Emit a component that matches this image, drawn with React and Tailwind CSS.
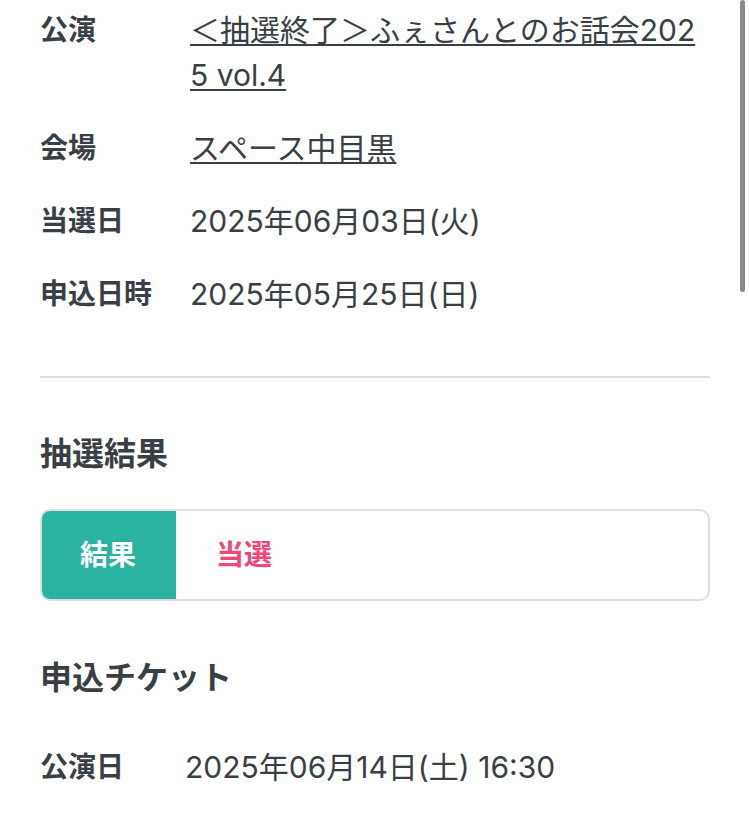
import React from "react";

const labelCls =
  "w-[150px] shrink-0 text-[28px] leading-[45px] font-bold text-[#3a3f46]";
const valueCls = "flex-1 text-[30px] leading-[45px] text-[#3a3f46] break-all";

function InfoRow({ label, children, labelWidth }) {
  return (
    <div className="flex">
      <div className={labelWidth || labelCls}>{label}</div>
      <div className={valueCls}>{children}</div>
    </div>
  );
}

export default function App() {
  return (
    <div
      className="relative w-[749px] h-[822px] overflow-hidden bg-white"
      style={{ fontFamily: 'Inter, "Noto Sans CJK JP", sans-serif' }}
    >
      {/* scroll indicator */}
      <div className="absolute right-[4px] top-0 w-[5px] h-[292px] rounded-full bg-[#8a8a8a]" />

      <div className="pl-[40px] pr-[39px] pt-[8px]">
        {/* Event info */}
        <div className="flex flex-col gap-[28px]">
          <InfoRow label="公演">
            <a href="#" className="underline underline-offset-[3px] decoration-[2px]">
              ＜抽選終了＞ふぇさんとのお話会2025 vol.4
            </a>
          </InfoRow>
          <InfoRow label="会場">
            <a href="#" className="underline underline-offset-[3px] decoration-[2px]">
              スペース中目黒 
            </a>
          </InfoRow>
          <InfoRow label="当選日">2025年06月03日(火)</InfoRow>
          <InfoRow label="申込日時">2025年05月25日(日)</InfoRow>
        </div>

        <div className="mt-[59px] h-[2px] bg-[#dedede]" />

        {/* Result */}
        <h2 className="mt-[54px] text-[32px] leading-[44px] font-bold text-[#3a3f46]">
          抽選結果
        </h2>
        <div className="mt-[33px] flex h-[92px] rounded-[10px] border-2 border-[#e0e0e0] overflow-hidden">
          <div className="w-[136px] -my-[2px] -ml-[2px] flex items-center justify-center bg-[#2ab39f] text-white text-[28px] font-bold">
            結果
          </div>
          <div className="flex items-center pl-[40px] text-[28px] font-bold text-[#f0477a]">
            当選
          </div>
        </div>

        {/* Tickets */}
        <h2 className="mt-[55px] text-[32px] leading-[44px] font-bold text-[#3a3f46]">
          申込チケット
        </h2>
        <div className="mt-[45px]">
          <InfoRow
            label="公演日"
            labelWidth="w-[145px] shrink-0 text-[28px] leading-[45px] font-bold text-[#3a3f46]"
          >
            2025年06月14日(土) 16:30
          </InfoRow>
        </div>
      </div>
    </div>
  );
}
